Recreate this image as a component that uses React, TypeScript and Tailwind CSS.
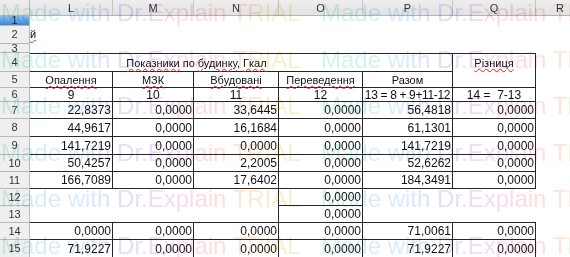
import React from 'react';

const COLS = ['w-[83px]', 'w-[81px]', 'w-[85px]', 'w-[84px]', 'w-[90px]', 'w-[83px]'];
const WAVY = 'underline decoration-wavy decoration-[#e02020] decoration-1 underline-offset-[1px]';

type CellProps = {
  w: string;
  t?: string;
  a?: 'l' | 'c' | 'r';
  r?: boolean;
  b?: boolean;
  top?: boolean;
  u?: boolean;
  extra?: string;
};

function Cell({ w, t, a = 'c', r, b, top, u, extra = '' }: CellProps) {
  const align = a === 'r' ? 'justify-end pr-[1px]' : a === 'l' ? 'justify-start' : 'justify-center';
  return (
    <div
      className={`${w} shrink-0 flex items-center whitespace-nowrap border-[#262626] ${align} ${r ? 'border-r' : ''} ${b ? 'border-b' : ''} ${top ? 'border-t' : ''} ${extra}`}
    >
      {t && <span className={u ? WAVY : ''}>{t}</span>}
    </div>
  );
}

function Row({ n, h, active, children }: { n: number; h: string; active?: boolean; children?: React.ReactNode }) {
  return (
    <div className={`flex ${h}`}>
      <div
        className={`w-[30px] shrink-0 flex items-center justify-center border-r border-b border-[#b9b9b9] text-[11px] leading-none ${
          active ? 'bg-[linear-gradient(#8dbcf0,#3d85d8)] text-[#10233d]' : 'bg-[#efefef] text-[#333]'
        }`}
      >
        {n}
      </div>
      {children}
      <div className="flex-1" />
    </div>
  );
}

const NUMS: { n: number; h: string; v: string[] }[] = [
  { n: 7, h: 'h-[17px]', v: ['22,8373', '0,0000', '33,6445', '0,0000', '56,4818', '0,0000'] },
  { n: 8, h: 'h-[18px]', v: ['44,9617', '0,0000', '16,1684', '0,0000', '61,1301', '0,0000'] },
  { n: 9, h: 'h-[18px]', v: ['141,7219', '0,0000', '0,0000', '0,0000', '141,7219', '0,0000'] },
  { n: 10, h: 'h-[17px]', v: ['50,4257', '0,0000', '2,2005', '0,0000', '52,6262', '0,0000'] },
  { n: 11, h: 'h-[17px]', v: ['166,7089', '0,0000', '17,6402', '0,0000', '184,3491', '0,0000'] },
];

const BOTTOM: { n: number; h: string; v: string[] }[] = [
  { n: 14, h: 'h-[17px]', v: ['0,0000', '0,0000', '0,0000', '0,0000', '71,0061', '0,0000'] },
  { n: 15, h: 'h-[18px]', v: ['71,9227', '0,0000', '0,0000', '0,0000', '71,9227', '0,0000'] },
];

const WM_TOPS = ['top-[0px]', 'top-[47px]', 'top-[93px]', 'top-[140px]', 'top-[186px]', 'top-[233px]'];

function Watermark() {
  return (
    <div className="pointer-events-none absolute inset-0 overflow-hidden">
      {WM_TOPS.map((t) => (
        <div key={t} className={`absolute left-[1px] ${t} flex whitespace-nowrap text-[24px] leading-[26px]`}>
          {[0, 1].map((i) => (
            <span
              key={i}
              className="w-[320px] shrink-0 bg-[linear-gradient(90deg,#cef7e9_0%,#d6ebfc_24%,#e4dcfc_40%,#f9d9f1_56%,#ffdcd8_68%,#ffe6d0_78%,#f7f1cc_88%,#ddf6d4_100%)] bg-clip-text text-transparent mix-blend-multiply"
            >
              Made with Dr.Explain TRIAL
            </span>
          ))}
        </div>
      ))}
    </div>
  );
}

export default function App() {
  return (
    <div className="relative w-[570px] h-[257px] overflow-hidden bg-white text-[12px] leading-[14px] text-[#111] font-['Liberation_Sans',Arial,sans-serif]">
      {/* column headers */}
      <div className="flex h-[16px] bg-[linear-gradient(#eeeeee,#e2e2e2)] border-b border-[#b5b5b5] text-[11px] text-[#333]">
        <div className="w-[30px] shrink-0 border-r border-[#b5b5b5]" />
        {['L', 'M', 'N', 'O', 'P', 'Q'].map((c, i) => (
          <div key={c} className={`${COLS[i]} shrink-0 flex items-center justify-center border-r border-[#c6c6c6]`}>
            {c}
          </div>
        ))}
        <div className="w-[49px] shrink-0 flex items-center justify-center border-r border-[#c6c6c6]">R</div>
      </div>

      <Row n={1} h="h-[10px]" active />
      <Row n={2} h="h-[18px]">
        <Cell w={COLS[0]} a="l" t="й" u extra="items-end pb-[3px] text-[11px]" />
      </Row>
      <Row n={3} h="h-[9px]" />

      <Row n={4} h="h-[19px]">
        <div className="w-[333px] shrink-0 flex items-center justify-center whitespace-nowrap border-t border-b border-[#262626] text-[11px]">
          <span className={WAVY}>Показники</span>
          <span>&nbsp;по&nbsp;</span>
          <span className={WAVY}>будинку,</span>
          <span>&nbsp;</span>
          <span className={WAVY}>Гкал</span>
        </div>
        <Cell w={COLS[4]} top b r />
        <Cell w={COLS[5]} top r t="Різниця" u extra="text-[11px]" />
      </Row>

      <Row n={5} h="h-[16px]">
        <Cell w={COLS[0]} r b t="Опалення" u extra="text-[11px]" />
        <Cell w={COLS[1]} r b t="МЗК" u extra="text-[11px]" />
        <Cell w={COLS[2]} r b t="Вбудовані" u extra="text-[11px]" />
        <Cell w={COLS[3]} r b t="Переведення" u extra="text-[11px]" />
        <Cell w={COLS[4]} r b t="Разом" extra="text-[11px]" />
        <Cell w={COLS[5]} r b />
      </Row>

      <Row n={6} h="h-[14px]">
        <Cell w={COLS[0]} r b t="9" />
        <Cell w={COLS[1]} r b t="10" />
        <Cell w={COLS[2]} r b t="11" />
        <Cell w={COLS[3]} r b t="12" />
        <Cell w={COLS[4]} r b t="13 = 8 + 9+11-12" extra="tracking-[-0.35px]" />
        <Cell w={COLS[5]} r b t="14 =  7-13" extra="whitespace-pre" />
      </Row>

      {NUMS.map((row) => (
        <Row key={row.n} n={row.n} h={row.h}>
          {row.v.map((v, i) => (
            <Cell key={i} w={COLS[i]} a="r" r b t={v} />
          ))}
        </Row>
      ))}

      <Row n={12} h="h-[17px]">
        <Cell w={COLS[0]} />
        <Cell w={COLS[1]} />
        <Cell w={COLS[2]} r />
        <Cell w={COLS[3]} a="r" r b t="0,0000" />
      </Row>
      <Row n={13} h="h-[17px]">
        <Cell w={COLS[0]} b />
        <Cell w={COLS[1]} b />
        <Cell w={COLS[2]} r b />
        <Cell w={COLS[3]} a="r" r b t="0,0000" />
        <Cell w={COLS[4]} b />
        <Cell w={COLS[5]} b />
      </Row>

      {BOTTOM.map((row) => (
        <Row key={row.n} n={row.n} h={row.h}>
          {row.v.map((v, i) => (
            <Cell key={i} w={COLS[i]} a="r" r b t={v} />
          ))}
        </Row>
      ))}

      <Watermark />
    </div>
  );
}
